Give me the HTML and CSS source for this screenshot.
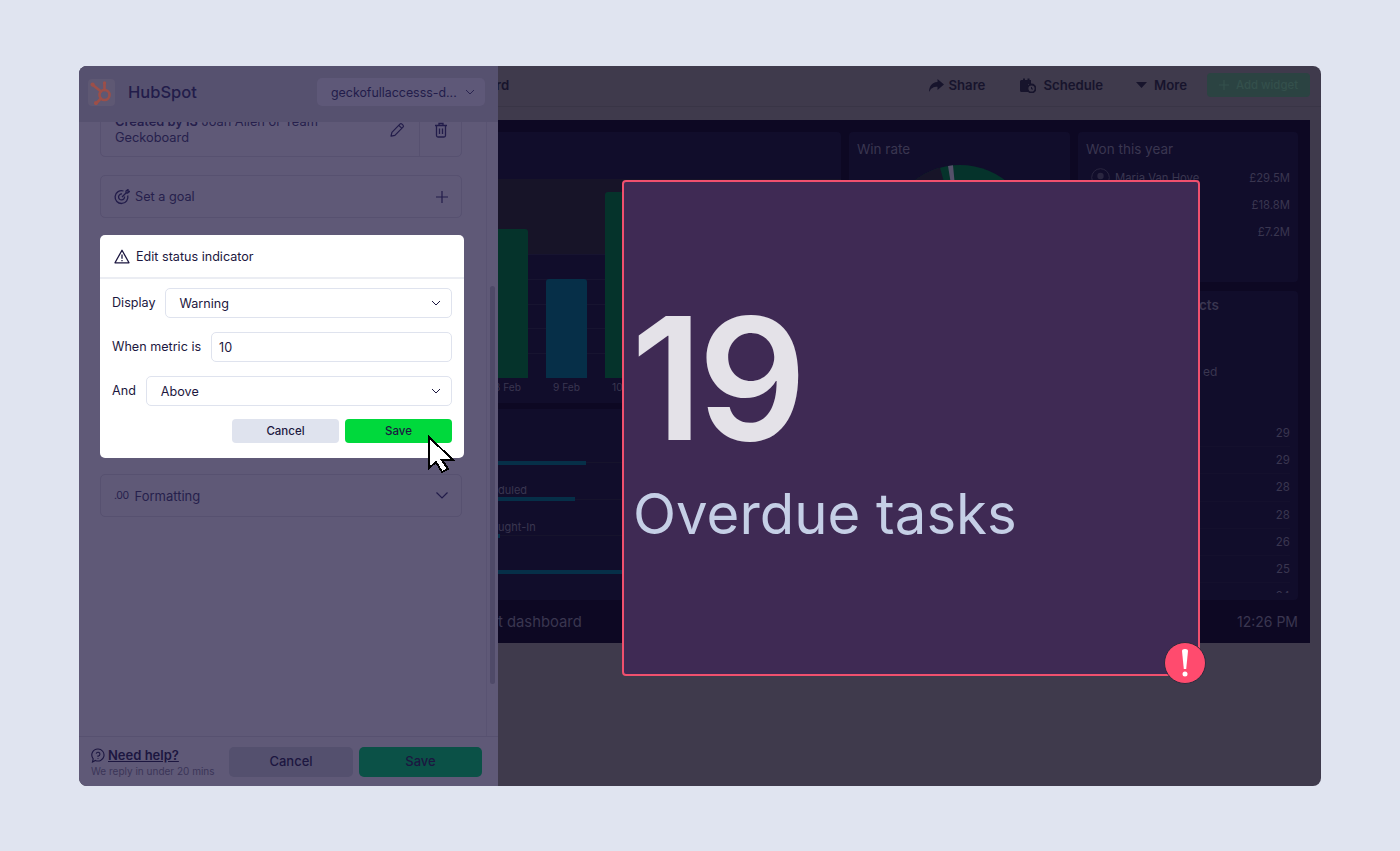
FILE: index.html
```html
<!DOCTYPE html>
<html lang="en">
<head>
<meta charset="utf-8">
<title>Edit status indicator</title>
<link rel="stylesheet" href="styles.css">
</head>
<body>
<div class="window">
  <aside class="panel">
    <header class="panel-header">
      <div class="logo">
        <svg width="25" height="25" viewBox="0 0 25 25" fill="none" stroke="#9c4f49" stroke-width="2.6" stroke-linecap="round"><circle cx="15.500" cy="15" r="5"/><path d="M15.500 10V4"/><path d="M12 11.500 4.500 5.500"/><path d="M12 18.500 7.500 23"/><circle cx="15.500" cy="3" r="1.700" fill="#9c4f49" stroke="none"/><circle cx="3.600" cy="4.600" r="2.100" fill="#9c4f49" stroke="none"/><circle cx="7" cy="23" r="2.100" fill="#9c4f49" stroke="none"/></svg>
      </div>
      <span class="brand">HubSpot</span>
      <div class="account">
        <span>geckofullaccesss-d...</span>
        <svg width="10" height="6" viewBox="0 0 10 6" fill="none" stroke="#2a2450" stroke-width="1"><path d="M1 1l4 4 4-4"/></svg>
      </div>
    </header>
    <div class="panel-body">
      <div class="panel-content">
        <section class="card created">
          <p class="created-text"><b>Created by IS</b> Joan Allen or Team Geckoboard</p>
          <div class="card-action">
            <svg width="16" height="16" viewBox="0 0 16 16" fill="none" stroke="#221c4a" stroke-width="1.200" stroke-linejoin="round"><path d="M2 14.200l.9-3.900 8-8.200a1.500 1.500 0 0 1 2.100 0l1 1a1.500 1.500 0 0 1 0 2.100l-8.100 8.100z"/><path d="M9.800 3.300l2.900 2.900"/></svg>
          </div>
          <div class="card-action bordered">
            <svg width="14" height="16" viewBox="0 0 14 16" fill="none" stroke="#221c4a" stroke-width="1.300"><path d="M1 3.500h12"/><path d="M5 3.500V1.500h4v2"/><path d="M2.500 3.500v10a1.500 1.500 0 0 0 1.500 1.500h6a1.500 1.500 0 0 0 1.500-1.500v-10"/><path d="M5.500 6.500v5.500M8.500 6.500v5.500"/></svg>
          </div>
        </section>
        <section class="card row-card">
          <svg width="16" height="16" viewBox="0 0 16 16" fill="none" stroke="#221c4a" stroke-width="1.300"><path d="M13.700 6.500A6.400 6.400 0 1 1 9.500 2"/><path d="M10.500 7.500a3 3 0 1 1-2.500-2.500"/><path d="M8 8l4-4M12 4V2l2-1.500V2.500h1.500L13.500 4z"/></svg>
          <span class="row-label">Set a goal</span>
          <svg class="row-end" width="12" height="12" viewBox="0 0 12 12" fill="none" stroke="#221c4a" stroke-width="1.200"><path d="M6 0v12M0 6h12"/></svg>
        </section>
        <section class="dialog">
          <div class="dialog-head">
            <svg width="16" height="15" viewBox="0 0 16 15" fill="none" stroke="#1c1740" stroke-width="1.300" stroke-linejoin="round"><path d="M8 1.200 15 13.800H1z"/><path d="M8 5.500v4.300M8 11v1.200"/></svg>
            <span>Edit status indicator</span>
          </div>
          <div class="dialog-body">
            <div class="field">
              <label>Display</label>
              <div class="control"><span class="select-value">Warning</span><svg width="10" height="6" viewBox="0 0 10 6" fill="none" stroke="#1c1740" stroke-width="1"><path d="M1 1l4 4 4-4"/></svg></div>
            </div>
            <div class="field">
              <label>When metric is</label>
              <div class="control input-control"><span>10</span></div>
            </div>
            <div class="field">
              <label>And</label>
              <div class="control"><span class="select-value">Above</span><svg width="10" height="6" viewBox="0 0 10 6" fill="none" stroke="#1c1740" stroke-width="1"><path d="M1 1l4 4 4-4"/></svg></div>
            </div>
            <div class="dialog-actions">
              <button class="btn btn-cancel">Cancel</button>
              <button class="btn btn-save">Save</button>
            </div>
          </div>
        </section>
        <section class="card row-card formatting">
          <span class="dec">.00</span>
          <span class="row-label">Formatting</span>
          <svg class="row-end" width="12" height="7" viewBox="0 0 12 7" fill="none" stroke="#221c4a" stroke-width="1.200"><path d="M.5.500 6 6l5.500-5.500"/></svg>
        </section>
      </div>
      <div class="scroll-track"><div class="scroll-thumb"></div></div>
    </div>
    <footer class="panel-footer">
      <div class="help">
        <div class="help-top">
          <svg width="14" height="15" viewBox="0 0 14 15" fill="none" stroke="#1c1640" stroke-width="1.100"><path d="M7 1a6 6 0 1 1-2.600 11.400L1.500 14l.7-3.200A6 6 0 0 1 7 1z"/><path d="M5.200 5.600A1.900 1.900 0 1 1 7 8v1M7 10.200v.9"/></svg>
          <a class="help-link">Need help?</a>
        </div>
        <div class="help-sub">We reply in under 20 mins</div>
      </div>
      <button class="foot-btn foot-cancel">Cancel</button>
      <button class="foot-btn foot-save">Save</button>
    </footer>
  </aside>

  <main class="main">
    <div class="topbar">
      <span class="board-title">rd</span>
      <div class="tool tool-share">
        <svg width="16" height="13" viewBox="0 0 16 13" fill="#17142c"><path d="M9.500 0 16 5.500 9.500 11V7.700C5.500 7.700 3 9 1 13c0-5 2.500-9.500 8.500-10z"/></svg>
        <span>Share</span>
      </div>
      <div class="tool tool-schedule">
        <svg width="16" height="15" viewBox="0 0 16 15"><path fill="#17142c" d="M1.500 2H3V.5h2V2h2.500V.5h2V2H11v4H8v8H1.500A1.500 1.500 0 0 1 0 12.500v-9A1.500 1.500 0 0 1 1.500 2z"/><circle cx="11.500" cy="10.500" r="4" fill="none" stroke="#17142c" stroke-width="1.800"/><path d="M11.500 9v2h1.500" stroke="#17142c" fill="none"/></svg>
        <span>Schedule</span>
      </div>
      <div class="tool tool-more">
        <svg width="11" height="6" viewBox="0 0 11 6" fill="#17142c"><path d="M0 0h11L5.500 6z"/></svg>
        <span>More</span>
      </div>
      <button class="add-widget">
        <svg width="10" height="10" viewBox="0 0 10 10" fill="none" stroke="#34504c" stroke-width="1.200"><path d="M5 0v10M0 5h10"/></svg>
        <span>Add widget</span>
      </button>
    </div>
    <div class="dashboard">
      <div class="grid">
        <div class="stack stack-left">
          <section class="widget chart-widget">
            <div class="chart">
              <div class="chart-col"><div class="bar green" style="height:149px"></div><span>8 Feb</span></div>
              <div class="chart-col"><div class="bar blue" style="height:99px"></div><span>9 Feb</span></div>
              <div class="chart-col"><div class="bar green" style="height:186px"></div><span class="cut-label">10</span></div>
            </div>
          </section>
          <section class="widget funnel">
            <div class="funnel-row"><span></span><div class="track"><i style="width:88px"></i></div></div>
            <div class="funnel-row"><span>duled</span><div class="track"><i style="width:77px"></i></div></div>
            <div class="funnel-row"><span>ught-In</span><div class="track"><i style="width:2px"></i></div></div>
            <div class="funnel-row"><span></span><div class="track"><i style="width:100%"></i></div></div>
          </section>
        </div>
        <section class="widget win-rate">
          <h3>Win rate</h3>
          <svg class="pie" width="150" height="150" viewBox="0 0 150 150"><circle cx="75" cy="75" r="75" fill="#05332b"/><path d="M75 75 55 2.700A75 75 0 0 0 0 75z" fill="#171428"/><path d="M75 75 63 1 68 .3z" fill="#55506a"/></svg>
        </section>
        <div class="stack stack-right">
          <section class="widget won">
            <h3>Won this year</h3>
            <div class="won-row">
              <svg width="19" height="19" viewBox="0 0 19 19" fill="none" stroke="#2a2640"><circle cx="9.500" cy="9.500" r="8.800"/><circle cx="9.500" cy="8" r="3.200" fill="#2a2640" stroke="none"/><path d="M4.500 15.500c1-3 9-3 10 0" fill="#2a2640" stroke="none"/></svg>
              <span class="who">Maria Van Hove</span>
              <span class="val">£29.5M</span>
            </div>
            <div class="won-row"><span class="val">£18.8M</span></div>
            <div class="won-row"><span class="val">£7.2M</span></div>
          </section>
          <section class="widget products">
            <h3 class="products-title">cts</h3>
            <p class="products-note">ed</p>
            <ul class="num-list">
              <li>29</li><li>29</li><li>28</li><li>28</li><li>26</li><li>25</li><li>24</li>
            </ul>
          </section>
        </div>
      </div>
      <div class="board-foot">
        <span class="foot-name">t dashboard</span>
        <span class="foot-time">12:26 PM</span>
      </div>
    </div>
  </main>

  <section class="focus-card">
    <div class="big-number">19</div>
    <div class="big-label">Overdue tasks</div>
    <div class="alert">
      <svg width="8" height="28" viewBox="0 0 8 28" fill="#fff"><path d="M1 2a3 2 0 0 1 6 0L5.200 20H2.800z"/><circle cx="4" cy="25" r="2.500"/></svg>
    </div>
  </section>

  <svg class="cursor" width="28" height="39" viewBox="-2 -2 28 39" shape-rendering="crispEdges"><path d="M0 0V31L7 25 13 35 19 32 13 23H24z" fill="#fff" stroke="#000" stroke-width="2"/></svg>
</div>
</body>
</html>
```
FILE: styles.css
```css
* { box-sizing: border-box; }
html, body { height: 851px; overflow: hidden; }
body {
  margin: 0;
  padding-top: 66px;
  background: #e0e4f0;
  font-family: "Inter", "Liberation Sans", sans-serif;
  color: #1f1845;
}
button { font-family: inherit; border: 0; padding: 0; }
h3, p, ul { margin: 0; padding: 0; font-weight: 400; }
ul { list-style: none; }

.window {
  position: relative;
  display: flex;
  width: 1242px;
  height: 720px;
  margin: 0 auto;
  border-radius: 8px;
  overflow: hidden;
  background: #3f3a4c;
}

/* Left panel */
.panel {
  display: flex;
  flex-direction: column;
  flex: 0 0 419px;
  background: #5f5977;
}
.panel-header {
  display: flex;
  align-items: center;
  flex: 0 0 56px;
  padding: 0 13px 4px 9px;
  background: #56516f;
}
.logo {
  display: flex;
  align-items: center;
  justify-content: center;
  width: 27px;
  height: 27px;
  border-radius: 4px;
  background: #5e5873;
}
.brand { margin-left: 13px; font-size: 16.500px; font-weight: 500; color: #221c4a; }
.account {
  display: flex;
  align-items: center;
  justify-content: space-between;
  width: 168px;
  height: 28px;
  margin-left: auto;
  padding: 0 10px 0 14px;
  border-radius: 5px;
  background: #5e5878;
  font-size: 12.400px;
  color: #221c4a;
}
.panel-body { display: flex; flex: 1; min-height: 0; overflow: hidden; }
.panel-content { flex: 0 0 407px; padding: 0 0 0 21px; }
.scroll-track { flex: 1; padding: 164px 3px 0 3px; border-left: 1px solid #595372; }
.scroll-thumb { height: 398px; border-radius: 3px; background: #4f4a68; }

.card { width: 362px; border: 1px solid #575170; border-radius: 5px; }
.created {
  display: flex;
  height: 54px;
  margin-top: -19px;
  font-size: 12.800px;
  line-height: 16px;
}
.created-text { flex: 1; padding: 10px 30px 0 14px; color: #261f4c; }
.created-text b { font-weight: 600; }
.card-action { display: flex; align-items: center; justify-content: center; flex: 0 0 44px; }
.bordered { flex: 0 0 42px; border-left: 1px solid #575170; }
.row-card {
  display: flex;
  align-items: center;
  height: 43px;
  margin-top: 18px;
  padding: 0 13px;
  font-size: 12.700px;
  color: #261f4c;
}
.row-label { margin-left: 5px; margin-top: -1px; }
.row-end { margin-left: auto; }
.dec { font-size: 10.500px; letter-spacing: -.5px; }

.dialog {
  width: 364px;
  height: 223px;
  margin-top: 17px;
  border-radius: 5px;
  background: #fff;
  color: #1c1740;
  font-size: 12.600px;
}
.dialog-head {
  display: flex;
  align-items: center;
  gap: 6px;
  height: 44px;
  padding: 0 14px;
  border-bottom: 2px solid #ebedf3;
}
.dialog-body { display: flex; flex-direction: column; gap: 14px; padding: 9px 12px 0; }
.field { display: flex; align-items: center; gap: 10px; }
.field:first-child { gap: 9px; }
.control {
  display: flex;
  align-items: center;
  justify-content: space-between;
  flex: 1;
  height: 30px;
  padding: 0 10px 0 14px;
  border: 1px solid #dfe3ee;
  border-radius: 5px;
}
.select-value { padding-top: 1px; }
.input-control { padding-left: 7px; }
.field label { margin-top: -2px; }
.dialog-actions { display: flex; justify-content: flex-end; gap: 6px; margin-top: -1px; }
.btn {
  width: 107px;
  height: 24px;
  border-radius: 4px;
  font-size: 11.500px;
  font-weight: 500;
  color: #1c1740;
}
.btn-cancel { background: #dfe3ee; }
.btn-save { background: #00d93c; }
.formatting { margin-top: 16px; padding-left: 13px; font-size: 13px; }
.formatting .row-label { margin-left: 6px; margin-top: 0; }

.panel-footer {
  display: flex;
  align-items: center;
  flex: 0 0 50px;
  padding: 0 16px 0 12px;
  border-top: 1px solid #575170;
}
.help { width: 138px; margin-top: 1px; }
.help-top { display: flex; align-items: center; gap: 3px; }
.help-link { font-size: 13px; font-weight: 600; color: #1c1640; text-decoration: underline; }
.help-sub { margin-top: 2px; font-size: 10px; color: #3b3558; white-space: nowrap; }
.foot-btn { height: 30px; padding-bottom: 2px; border-radius: 5px; font-size: 13px; font-weight: 500; color: #1c1640; }
.foot-cancel { width: 124px; background: #54506e; }
.foot-save { width: 123px; margin-left: 6px; background: #0b5147; }

/* Main */
.main { display: flex; flex-direction: column; flex: 1; min-width: 0; overflow: hidden; }
.topbar {
  display: flex;
  align-items: center;
  flex: 0 0 41px;
  padding: 0 11px 2px 0;
  border-bottom: 1px solid #393546;
  font-size: 13.200px;
  font-weight: 600;
  color: #17142c;
}
.board-title { margin-left: -2px; margin-right: auto; }
.tool { display: flex; align-items: center; gap: 4px; }
.tool-schedule { margin-left: 35px; gap: 7px; }
.tool-more { margin-left: 33px; gap: 7px; }
.add-widget {
  display: flex;
  align-items: center;
  justify-content: center;
  gap: 7px;
  width: 103px;
  height: 24px;
  margin-left: 20px;
  border-radius: 4px;
  background: #2b4342;
  font-size: 11.400px;
  font-weight: 500;
  color: #34504c;
}

.dashboard {
  display: flex;
  flex-direction: column;
  height: 523px;
  margin: 13px 11px 0 0;
  padding: 12px 12px 0 0;
  background: #0d0823;
  color: #3a3650;
}
.grid {
  display: grid;
  grid-template-columns: 343px 221px 220px;
  column-gap: 8px;
  height: 468px;
}
.stack { display: flex; flex-direction: column; min-height: 0; }
.stack-left { gap: 6px; }
.stack-right { gap: 9px; }
.widget { background: #110d2b; border-radius: 4px; overflow: hidden; }
.widget h3 { font-size: 13.500px; font-weight: 400; color: #3a3650; }
.chart-widget { flex: 0 0 271px; padding-top: 47px; border-radius: 0 4px 4px 0; }
.chart {
  display: flex;
  height: 224px;
  margin-left: -20px;
  background:
    linear-gradient(#171428, #171428) 0 0 / 100% 75px no-repeat,
    repeating-linear-gradient(#171430 0 1px, transparent 1px 24.900px) 0 0 / 100% 199px no-repeat;
}
.chart-col { display: flex; flex-direction: column; align-items: center; justify-content: flex-end; flex: 0 0 59px; width: 59px; padding-left: 18px; font-size: 10.200px; }
.chart-col span { height: 25px; padding-top: 3px; white-space: nowrap; }
.chart-col .cut-label { align-self: flex-start; margin-left: 7px; }
.bar { width: 41px; border-radius: 3px 3px 0 0; flex: none; }
.green { background: #05332b; }
.blue { background: #062f48; }
.chart-col:first-child { margin-left: -9px; }

.funnel { flex: 1; padding-top: 19px; border-radius: 0 4px 4px 0; }
.funnel-row { display: flex; flex-direction: column; justify-content: flex-end; height: 36.500px; font-size: 11px; }
.funnel-row span { line-height: 14px; }
.track { height: 4px; background: linear-gradient(#16132c, #16132c) 0 1.500px / 100% 1px no-repeat; }
.track i { display: block; height: 4px; background: #062f48; }

.win-rate { padding: 9px 8px; }
.pie { display: block; margin: 8px auto 0; }
.won { flex: 0 0 150px; padding: 9px 8px; }
.won-row { display: flex; align-items: center; height: 27px; font-size: 11.300px; padding: 0 0 0 5px; }
.won h3 + .won-row { margin-top: 7px; }
.who { margin-left: 5px; }
.val { margin-left: auto; }
.products { flex: 1; padding: 6px 8px 0; }
.products-title { font-weight: 600 !important; padding-left: 113px; line-height: 16px; }
.products-note { margin-top: 51px; padding-left: 117px; font-size: 12px; line-height: 15px; }
.num-list { height: 173px; margin-top: 41px; overflow: hidden; font-size: 11.500px; }
.num-list li { height: 27.200px; line-height: 27px; text-align: right; border-bottom: 1px solid #14102d; }

.board-foot {
  display: flex;
  align-items: center;
  justify-content: space-between;
  flex: 1;
  color: #3a3650;
}
.foot-name { font-size: 14.800px; }
.foot-time { font-size: 14px; }

/* Overlays */
.focus-card {
  position: absolute;
  left: 543px;
  top: 114px;
  width: 578px;
  height: 496px;
  padding: 0 10px;
  border: 2px solid #f0506e;
  border-radius: 4px;
  background: #3f2a54;
}
.big-number {
  margin-top: 96px;
  margin-left: -3px;
  font-size: 170px;
  line-height: 200px;
  font-weight: 600;
  letter-spacing: -5px;
  color: #e4e2e8;
}
.big-label { margin-top: 1px; margin-left: -1px; font-size: 56.300px; line-height: 70px; font-weight: 400; color: #c5cfe6; white-space: nowrap; }
.alert {
  position: absolute;
  right: -8px;
  bottom: -10px;
  display: flex;
  align-items: center;
  justify-content: center;
  width: 42px;
  height: 42px;
  border: 1px solid #2d2a3d;
  border-radius: 50%;
  background: #ff4b6e;
}
.cursor { position: absolute; left: 348px; top: 369px; }
```
